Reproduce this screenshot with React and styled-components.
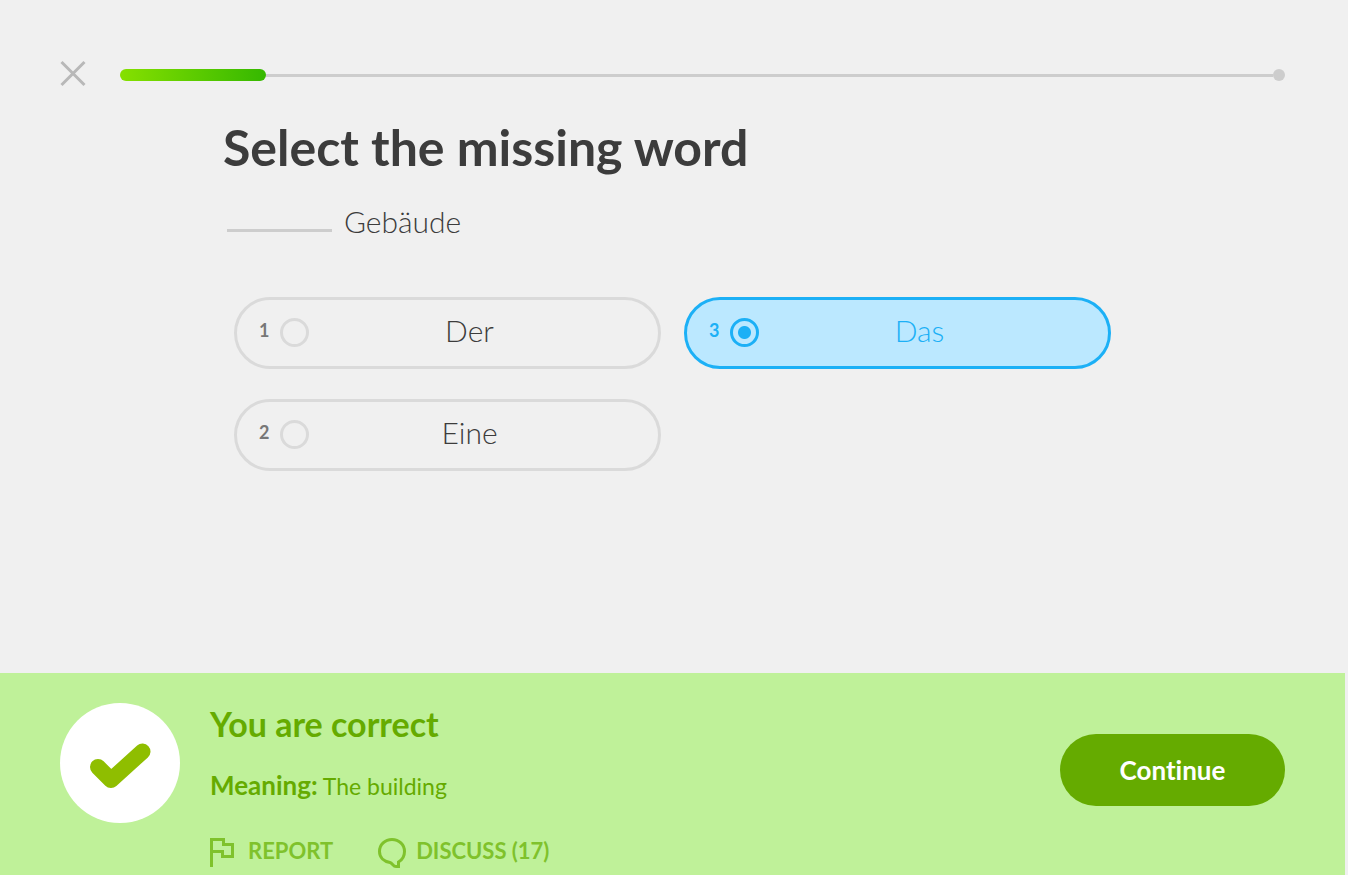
import React, { useState } from "react";
import styled, { createGlobalStyle } from "styled-components";

const GlobalStyle = createGlobalStyle`
  *, *::before, *::after { box-sizing: border-box; }
  body {
    margin: 0;
    background: #f0f0f0;
    color: #3c3c3c;
    font-family: Lato, "Open Sans", sans-serif;
    font-variant-ligatures: none;
  }
  h1, h2, p { margin: 0; }
  button { font-family: inherit; font-variant-ligatures: inherit; border: 0; cursor: pointer; }
`;

const Page = styled.div`
  min-height: 100vh;
  display: flex;
  flex-direction: column;
`;

const Header = styled.header`
  display: flex;
  align-items: center;
  gap: 34px;
  padding: 60px 63px 0 60px;
`;

const CloseButton = styled.button`
  display: flex;
  padding: 0;
  background: none;
  color: #b8b8b8;
`;

const Track = styled.div`
  flex: 1;
  display: flex;
  align-items: center;
  height: 12px;
  margin-top: 3px;
`;

const Fill = styled.div`
  height: 12px;
  border-radius: 6px;
  background: linear-gradient(to right, #86e000, #35b800);
`;

const Line = styled.div`
  flex: 1;
  height: 3px;
  background: #cdcdcd;
`;

const EndDot = styled.div`
  width: 12px;
  height: 12px;
  border-radius: 50%;
  background: #cdcdcd;
`;

const Challenge = styled.main`
  flex: 1;
  width: 100%;
  max-width: 902px;
  margin: 0 auto;
  padding-top: 30px;
`;

const Title = styled.h1`
  font-size: 50px;
  line-height: 60px;
  font-weight: 700;
`;

const Sentence = styled.p`
  display: flex;
  align-items: flex-end;
  gap: 12px;
  margin-top: 24px;
  padding-left: 4px;
  font-size: 30px;
  line-height: 40px;
  font-weight: 300;
`;

const Blank = styled.span`
  width: 105px;
  height: 3px;
  margin-bottom: 9px;
  background: #cdcdcd;
`;

const Choices = styled.div`
  display: grid;
  grid-template: repeat(2, 72px) / repeat(2, 1fr);
  grid-auto-flow: column;
  gap: 30px 23px;
  margin-top: 56px;
  padding: 0 14px 0 11px;
`;

const Choice = styled.label`
  display: flex;
  align-items: center;
  padding: 0 22px 2px;
  border: 3px solid ${(p) => (p.$on ? "#1cb0f6" : "#dadada")};
  border-radius: 36px;
  background: ${(p) => (p.$on ? "#bbe8ff" : "transparent")};
  color: ${(p) => (p.$on ? "#1cb0f6" : "#777")};
  cursor: pointer;
`;

const ChoiceKey = styled.span`
  width: 11px;
  padding-bottom: 4px;
  font-size: 18px;
  line-height: 24px;
  font-weight: 700;
`;

const Radio = styled.input`
  appearance: none;
  flex: none;
  width: 29px;
  height: 29px;
  margin: 0 0 0 10px;
  border: 3px solid ${(p) => (p.checked ? "#1cb0f6" : "#dadada")};
  border-radius: 50%;
  background: ${(p) =>
    p.checked ? "radial-gradient(circle, #1cb0f6 6px, transparent 7px)" : "transparent"};
`;

const ChoiceText = styled.span`
  flex: 1;
  padding: 0 6px 4px 0;
  text-align: center;
  font-size: 30px;
  line-height: 40px;
  font-weight: 300;
  color: ${(p) => (p.$on ? "#1cb0f6" : "#3c3c3c")};
`;

const Footer = styled.footer`
  display: flex;
  align-items: flex-start;
  gap: 30px;
  min-height: 202px;
  margin-right: 3px;
  padding: 30px 60px 6px;
  background: #bff199;
  color: #65ab00;
`;

const Badge = styled.div`
  display: grid;
  place-items: center;
  width: 120px;
  height: 120px;
  padding-top: 5px;
  border-radius: 50%;
  background: #fff;
`;

const Feedback = styled.div`
  flex: 1;
`;

const Verdict = styled.h2`
  font-size: 34px;
  line-height: 42px;
  font-weight: 700;
`;

const Meaning = styled.p`
  margin-top: 22px;
  font-size: 23px;
  line-height: 36px;
`;

const MeaningLabel = styled.strong`
  font-size: 26px;
  font-weight: 700;
`;

const Actions = styled.div`
  display: flex;
  gap: 45px;
  margin-top: 29px;
`;

const Action = styled.button`
  display: flex;
  align-items: flex-start;
  gap: ${(p) => p.$gap}px;
  padding: 0;
  background: none;
  color: #7fc22c;
  font-size: 22px;
  line-height: 36px;
  font-weight: 700;

  svg { margin-top: 5px; }
`;

const ContinueButton = styled.button`
  width: 225px;
  height: 72px;
  margin-top: 31px;
  border-radius: 36px;
  background: #65ab00;
  color: #fff;
  font-size: 26px;
  font-weight: 700;
`;

const CHOICES = ["Der", "Eine", "Das"];

export default function App() {
  const [selected, setSelected] = useState(2);
  return (
    <>
      <GlobalStyle />
      <Page>
        <Header>
          <CloseButton aria-label="Close">
            <svg width="26" height="27" viewBox="0 0 26 27" fill="none" stroke="currentColor" strokeWidth="3">
              <path d="M1.5 2 24.5 25M24.5 2 1.5 25" />
            </svg>
          </CloseButton>
          <Track>
            <Fill style={{ width: "12.53%" }} />
            <Line />
            <EndDot />
          </Track>
        </Header>
        <Challenge>
          <Title>Select the missing word</Title>
          <Sentence>
            <Blank />
            Gebäude
          </Sentence>
          <Choices>
            {CHOICES.map((word, i) => (
              <Choice key={word} $on={i === selected}>
                <ChoiceKey>{i + 1}</ChoiceKey>
                <Radio type="radio" name="word" checked={i === selected} onChange={() => setSelected(i)} />
                <ChoiceText $on={i === selected}>{word}</ChoiceText>
              </Choice>
            ))}
          </Choices>
        </Challenge>
        <Footer>
          <Badge>
            <svg width="62" height="46" viewBox="0 0 62 46" fill="none" stroke="#8fbe00" strokeWidth="16" strokeLinecap="round" strokeLinejoin="round">
              <path d="M9 24 22 37 53.500 8.500" />
            </svg>
          </Badge>
          <Feedback>
            <Verdict>You are correct</Verdict>
            <Meaning>
              <MeaningLabel>Meaning:</MeaningLabel> The building
            </Meaning>
            <Actions>
              <Action $gap={13}>
                <svg width="25" height="29" viewBox="0 0 25 29" fill="none" stroke="currentColor" strokeWidth="3">
                  <path d="M1.500 29V1.500H13.500V6.500H22.500V18.500H12.500V13.500H1.500" />
                </svg>
                REPORT
              </Action>
              <Action $gap={10}>
                <svg width="28" height="30" viewBox="0 0 28 30" fill="none" stroke="currentColor" strokeWidth="3">
                  <path d="M20.500 28.500V24C24 22 26.500 18 26.500 13.500C26.500 6.500 21 1.500 14 1.500S1.500 6.500 1.500 13.500C1.500 19.500 6 23.500 12 24.500C14.500 25 15 28.500 18 28.500Z" />
                </svg>
                DISCUSS (17)
              </Action>
            </Actions>
          </Feedback>
          <ContinueButton>Continue</ContinueButton>
        </Footer>
      </Page>
    </>
  );
}
